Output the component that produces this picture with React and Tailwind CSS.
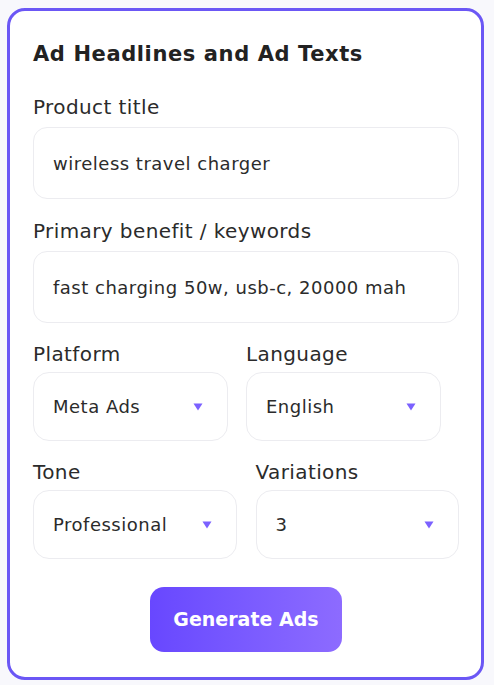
import { useState } from "react";

const Caret = () => (
    <svg width="10" height="8" viewBox="0 0 10 8" className="shrink-0">
        <path d="M0.5 0.5 H9.5 L5 7.5 Z" fill="#7b61ff" />
    </svg>
);

const Field = ({ label, value, className = "" }) => (
    <div className={className}>
        <div className="text-[20px] leading-6 tracking-[0.4px] text-[#2b2b2b] mb-2">{label}</div>
        <div className="h-[72px] flex items-center pl-[19px] pr-5 rounded-[14px] border border-[#ececf0] bg-white text-[18px] tracking-[0.5px] text-[#2b2b2b]">
            {value}
        </div>
    </div>
);

const Select = ({ label, value, className = "" }) => (
    <div className={className}>
        <div className="text-[20px] leading-6 tracking-[0.4px] text-[#2b2b2b] mb-1.5">{label}</div>
        <div className="h-[69px] flex items-center justify-between pl-[19px] pr-6 rounded-[16px] border border-[#ececf0] bg-white text-[18px] tracking-[0.5px] text-[#2b2b2b]">
            <span>{value}</span>
            <Caret />
        </div>
    </div>
);

const App = () => {
    const [loading, setLoading] = useState(false);

    return (
        <div className="min-h-screen bg-[#f8f8fc] pl-[7px] pr-[10px] pt-[8px] pb-[5px]" style={{ fontFamily: '"DejaVu Sans", sans-serif' }}>
            <div className="bg-white border-[3px] border-[#6b57f5] rounded-[18px] pl-[23px] pr-[22px] pt-[28px] pb-[25px]">
                <h1 className="text-[21px] leading-[30px] font-bold tracking-[0.6px] text-[#222] mb-[26px]">
                    Ad Headlines and Ad Texts
                </h1>

                <Field label="Product title" value="wireless travel charger" />
                <Field label="Primary benefit / keywords" value="fast charging 50w, usb-c, 20000 mah" className="mt-5" />

                <div className="flex gap-[18px] mt-[19px]">
                    <Select label="Platform" value="Meta Ads" className="w-[195px]" />
                    <Select label="Language" value="English" className="w-[195px]" />
                </div>

                <div className="grid grid-cols-2 gap-[19px] mt-[19px]">
                    <Select label="Tone" value="Professional" />
                    <Select label="Variations" value="3" />
                </div>

                <div className="flex justify-center mt-7">
                    <button
                        onClick={() => setLoading(!loading)}
                        className="w-[192px] h-[65px] rounded-[14px] bg-gradient-to-r from-[#6847ff] to-[#8d6bff] text-white text-[19px] font-bold"
                    >
                        Generate Ads
                    </button>
                </div>
            </div>
        </div>
    );
};

export default App;
